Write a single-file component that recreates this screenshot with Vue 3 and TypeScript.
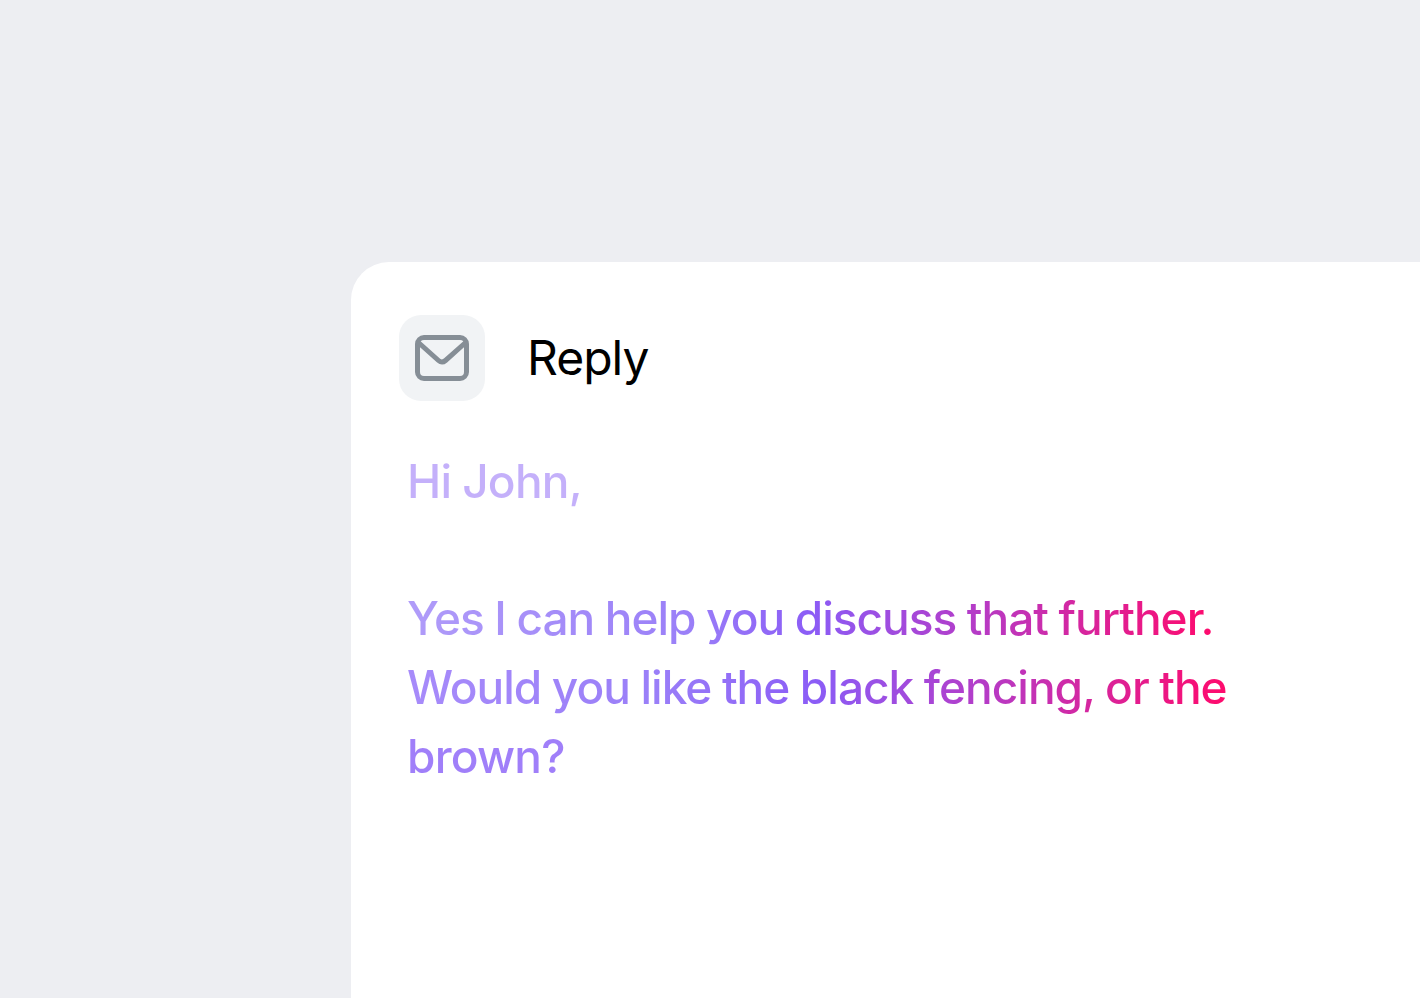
<script setup lang="ts">
const title = 'Reply'
</script>

<template>
  <div class="page">
    <section class="card">
      <header class="head">
        <div class="icon">
          <svg width="54" height="46" viewBox="0 0 54 46" fill="none">
            <rect x="2.5" y="2.5" width="49" height="41" rx="6.5" stroke="#868e96" stroke-width="5"/>
            <path d="M4.5 8.5 L23.5 25.5 Q27 28.5 30.5 25.5 L49.5 8.5" stroke="#868e96" stroke-width="5" stroke-linecap="round" stroke-linejoin="round"/>
          </svg>
        </div>
        <span class="title">{{ title }}</span>
      </header>
      <div class="body">
        <p class="line hi">Hi John,</p>
        <p class="line gap l1">Yes I can help you discuss that further.</p>
        <p class="line l2">Would you like the black fencing, or the</p>
        <p class="line l3">brown?</p>
      </div>
    </section>
  </div>
</template>

<style>
html, body { margin: 0; background: #edeef2; }
</style>

<style scoped>
.page {
  height: 998px;
  box-sizing: border-box;
  padding: 262px 0 0 351px;
  overflow: hidden;
  background: #edeef2;
  font-family: Inter, sans-serif;
}
.card {
  height: 800px;
  width: 1120px;
  box-sizing: border-box;
  background: #fff;
  border-radius: 38px;
  padding: 53px 48px 0;
}
.head { display: flex; align-items: center; gap: 42px; }
.icon {
  width: 86px; height: 86px;
  border-radius: 22px;
  background: #f1f3f5;
  display: flex; align-items: center; justify-content: center;
}
.title { font-size: 48px; letter-spacing: -1px; color: #000; padding-bottom: 2px; }
.body { padding: 46px 0 0 8px; }
.line {
  margin: 0;
  font-size: 46px;
  line-height: 69px;
  letter-spacing: -1px;
  word-spacing: -0.7px;
  font-weight: 500;
  width: fit-content;
  white-space: nowrap;
  background-clip: text;
  -webkit-background-clip: text;
  color: transparent;
}
.hi { background-image: linear-gradient(#c4b0fa, #c4b0fa); letter-spacing: -0.75px; }
.gap { margin-top: 68px; }
.l1 { background-image: linear-gradient(90deg, #b09cf9 0%, #9a7ff8 35%, #8b5cf6 50%, #b43cc8 70%, #ff0a6c 100%); }
.l2 { background-image: linear-gradient(90deg, #a78bfa 0%, #9a7ff8 30%, #8b5cf6 50%, #b43cc8 70%, #ff0a6c 100%); }
.l3 { background-image: linear-gradient(90deg, #a07ff9, #a07ff9); letter-spacing: -0.8px; }
</style>
